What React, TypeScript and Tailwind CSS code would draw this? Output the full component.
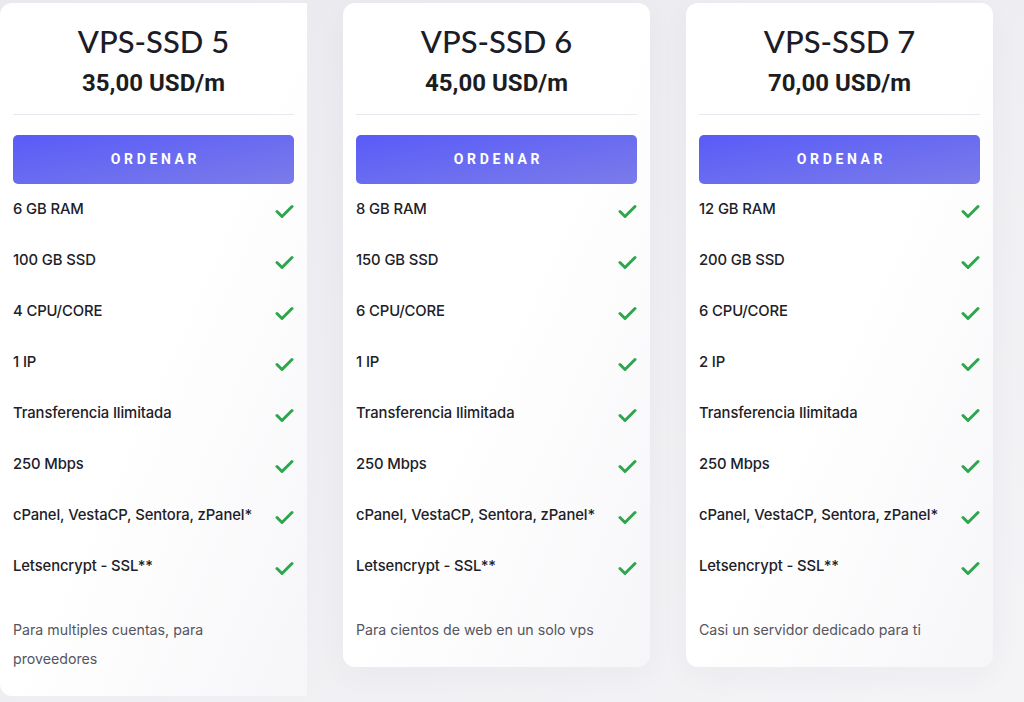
const plans = [
  {
    name: "VPS-SSD 5",
    price: "35,00 USD/m",
    features: ["6 GB RAM", "100 GB SSD", "4 CPU/CORE", "1 IP"],
    note: "Para multiples cuentas, para proveedores",
  },
  {
    name: "VPS-SSD 6",
    price: "45,00 USD/m",
    features: ["8 GB RAM", "150 GB SSD", "6 CPU/CORE", "1 IP"],
    note: "Para cientos de web en un solo vps",
  },
  {
    name: "VPS-SSD 7",
    price: "70,00 USD/m",
    features: ["12 GB RAM", "200 GB SSD", "6 CPU/CORE", "2 IP"],
    note: "Casi un servidor dedicado para ti",
  },
]

const shared = [
  "Transferencia Ilimitada",
  "250 Mbps",
  "cPanel, VestaCP, Sentora, zPanel*",
  "Letsencrypt - SSL**",
]

function CheckIcon() {
  return (
    <svg width="19" height="15" viewBox="0 0 19 15" fill="none" className="mt-[4px] shrink-0">
      <path d="M2 7.5 L7 12.5 L17 2.5" stroke="#2ea64d" strokeWidth="3" strokeLinecap="round" strokeLinejoin="round" />
    </svg>
  )
}

function PlanCard({ plan, first }: { plan: (typeof plans)[number]; first?: boolean }) {
  return (
    <div
      className={
        first
          ? "flex w-[307px] shrink-0 flex-col rounded-l-xl bg-linear-to-br from-white via-white to-[#f6f6f9] px-[13px] pb-[23px]"
          : "flex w-[307px] shrink-0 flex-col rounded-xl bg-linear-to-br from-white via-white to-[#f6f6f9] px-[13px] pb-[23px] shadow-[0_8px_30px_rgba(40,40,80,0.04)]"
      }
    >
      <h2 className="pt-[18px] text-center font-['Lato',sans-serif] text-[31px] leading-[40px] font-medium text-[#1c1c28]">
        {plan.name}
      </h2>
      <p className="mt-[7px] text-center font-['Roboto',sans-serif] text-[24px] leading-[30px] font-bold text-[#1d1d1f]">
        {plan.price}
      </p>
      <div className="mt-[16px] border-t border-[#e6e8ee]" />
      <button className="mt-[20px] h-[49px] rounded-[5px] bg-linear-to-br from-[#5a5af8] to-[#7b7be9] pl-[4px] font-['Roboto',sans-serif] text-[14px] font-bold tracking-[0.26em] text-white">
        ORDENAR
      </button>
      <ul>
        {[...plan.features, ...shared].map((f) => (
          <li key={f} className="flex h-[51px] items-center justify-between">
            <span className="font-['Inter',sans-serif] text-[14.8px] font-medium tracking-[-0.1px] text-[#202028]">{f}</span>
            <CheckIcon />
          </li>
        ))}
      </ul>
      <p className="mt-[23px] pr-[14px] font-['Inter',sans-serif] text-[14.2px] leading-[29px] text-[#55555f]">{plan.note}</p>
    </div>
  )
}

export default function App() {
  return (
    <div className="h-[702px] w-[1024px] overflow-hidden bg-linear-to-br from-[#e9e9ee] to-[#f4f4f7]">
      <div className="flex items-start gap-[36px] pt-[3px]">
        {plans.map((p, i) => (
          <PlanCard key={p.name} plan={p} first={i === 0} />
        ))}
      </div>
    </div>
  )
}
